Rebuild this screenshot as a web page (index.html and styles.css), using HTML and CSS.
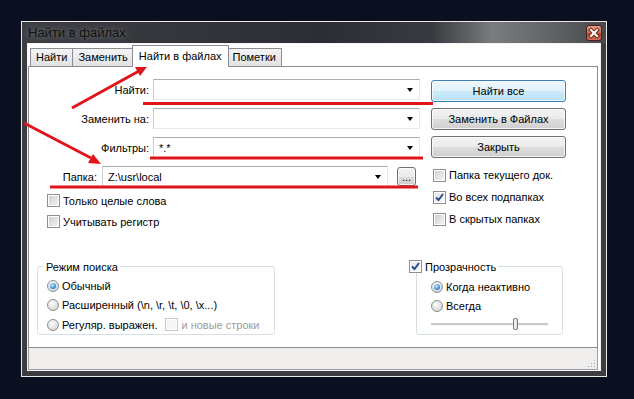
FILE: index.html
```html
<!DOCTYPE html>
<html lang="ru">
<head>
    <meta charset="UTF-8">
    <title>Найти в файлах</title>
    <link rel="stylesheet" href="styles.css">
</head>
<body>
    <div class="desk">
        <div class="window">
            <div class="titlebar">
                <span class="title">Найти в файлах</span>
                <span class="close">
                    <svg width="14" height="14" viewBox="0 0 14 14">
                        <path d="M4 4 L10 10 M10 4 L4 10" stroke="#6b2a1c" stroke-width="4" stroke-linecap="square"/>
                        <path d="M4 4 L10 10 M10 4 L4 10" stroke="#fff" stroke-width="2" stroke-linecap="square"/>
                    </svg>
                </span>
            </div>
            <div class="client">
                <div class="tabs">
                    <div class="tab">Найти</div>
                    <div class="tab">Заменить</div>
                    <div class="tab active">Найти в файлах</div>
                    <div class="tab">Пометки</div>
                </div>
                <div class="panel">
                    <div class="top">
                        <div class="fields">
                            <div class="row">
                                <label class="lbl">Найти:</label>
                                <div class="combo"><span class="arrow"></span></div>
                            </div>
                            <div class="row">
                                <label class="lbl">Заменить на:</label>
                                <div class="combo"><span class="arrow"></span></div>
                            </div>
                            <div class="row">
                                <label class="lbl">Фильтры:</label>
                                <div class="combo">*.*<span class="arrow"></span></div>
                            </div>
                            <div class="row folder">
                                <label class="lbl">Папка:</label>
                                <div class="combo">Z:\usr\local<span class="arrow"></span></div>
                                <button class="btn small">...</button>
                            </div>
                            <div class="check-row"><span class="box"></span>Только целые слова</div>
                            <div class="check-row"><span class="box"></span>Учитывать регистр</div>
                        </div>
                        <div class="actions">
                            <button class="btn default">Найти все</button>
                            <button class="btn">Заменить в Файлах</button>
                            <button class="btn">Закрыть</button>
                            <div class="checks">
                                <div class="check-row"><span class="box"></span>Папка текущего док.</div>
                                <div class="check-row"><span class="box on"><svg width="11" height="11" viewBox="0 0 11 11"><path d="M2 5.5 L4.5 8 L9 2" stroke="#2b4a8c" stroke-width="2" fill="none"/></svg></span>Во всех подпапках</div>
                                <div class="check-row"><span class="box"></span>В скрытых папках</div>
                            </div>
                        </div>
                    </div>
                    <div class="bottom">
                        <fieldset class="group mode">
                            <legend>Режим поиска</legend>
                            <div class="opt"><span class="radio on"></span>Обычный</div>
                            <div class="opt"><span class="radio"></span>Расширенный (\n, \r, \t, \0, \x...)</div>
                            <div class="opt"><span class="radio"></span>Регуляр. выражен.<span class="box off"></span><span class="dim">и новые строки</span></div>
                        </fieldset>
                        <fieldset class="group transp">
                            <legend><span class="box on"><svg width="11" height="11" viewBox="0 0 11 11"><path d="M2 5.5 L4.5 8 L9 2" stroke="#2b4a8c" stroke-width="2" fill="none"/></svg></span>Прозрачность</legend>
                            <div class="opt"><span class="radio on"></span>Когда неактивно</div>
                            <div class="opt"><span class="radio"></span>Всегда</div>
                            <div class="slider"><span class="thumb"></span></div>
                        </fieldset>
                    </div>
                </div>
                <div class="status">
                    <svg class="grip" width="9" height="9" viewBox="0 0 9 9" fill="#a9a9a9">
                        <rect x="7" y="1" width="1" height="1"/>
                        <rect x="4" y="4" width="1" height="1"/>
                        <rect x="7" y="4" width="1" height="1"/>
                        <rect x="1" y="7" width="1" height="1"/>
                        <rect x="4" y="7" width="1" height="1"/>
                        <rect x="7" y="7" width="1" height="1"/>
                    </svg>
                </div>
            </div>
        </div>
    </div>

    <!-- red annotations drawn over the dialog -->
    <svg class="marks" width="634" height="399">
        <g stroke="#e0141b" stroke-width="3" fill="none">
            <line x1="72" y1="108" x2="139" y2="71"/>
            <line x1="24" y1="123" x2="91" y2="158"/>
            <line x1="143" y1="103.5" x2="433" y2="103.5"/>
            <line x1="150" y1="158" x2="423" y2="158"/>
            <line x1="50" y1="187" x2="418" y2="187"/>
        </g>
        <g fill="#e0141b">
            <polygon points="148,65.5 140,76 135,67"/>
            <polygon points="101,164 88,163 93,154"/>
        </g>
    </svg>
</body>
</html>
```

FILE: styles.css
```css
* {
  box-sizing: border-box;
}

body {
  margin: 0;
  width: 634px;
  height: 399px;
  overflow: hidden;
  position: relative;
  background: #0b1020;
  font-family: "Liberation Sans", Arial, sans-serif;
  font-size: 11px;
  color: #000;
}

.desk {
  padding: 21px 0 0 21px;
}

.window {
  width: 586px;
  height: 356px;
  border: 1px solid #e9e9e9;
  background: #3c3d41;
  padding: 0 5px 5px;
  display: flex;
  flex-direction: column;
}

.titlebar {
  height: 21px;
  margin: 0 -5px;
  padding: 0 4px 0 6px;
  display: flex;
  align-items: center;
  justify-content: space-between;
  background: linear-gradient(90deg, #3d3e43 0px, #2d2e33 300px, #393a3f 410px, #7a7b7f 470px, #626367 530px, #47484c 584px);
}

.title {
  font-size: 13px;
  color: #111;
  text-shadow: 0 0 6px #8c8c8c;
}

.close {
  width: 16px;
  height: 16px;
  border: 1px solid #4d2117;
  border-radius: 3px;
  background: linear-gradient(#e7a08e, #d06a52 50%, #bb3f26 51%, #d0705a);
  display: flex;
  align-items: center;
  justify-content: center;
}

.client {
  flex: 1;
  border: 1px solid #f4f4f4;
  background: #fff;
  display: flex;
  flex-direction: column;
}

.tabs {
  height: 22px;
  display: flex;
  align-items: flex-end;
  padding-left: 2px;
}

.tab {
  height: 18px;
  padding: 0 5px;
  line-height: 16px;
  border: 1px solid #898c95;
  border-bottom: none;
  margin-right: -1px;
  background: linear-gradient(#f3f3f3, #e2e2e2);
}

.tab.active {
  height: 22px;
  line-height: 20px;
  margin: 0 -2px -1px -1px;
  padding: 0 6px;
  background: #fff;
  position: relative;
  z-index: 1;
}

.panel {
  height: 282px;
  margin-right: 2px;
  border: 1px solid #898c95;
  display: flex;
  flex-direction: column;
}

.top {
  display: flex;
  padding-top: 12px;
}

.fields {
  width: 392px;
}

.row {
  height: 21px;
  display: flex;
  align-items: center;
  margin-bottom: 8px;
}

.lbl {
  width: 120px;
  margin-right: 4px;
  text-align: right;
}

.combo {
  width: 267px;
  height: 21px;
  padding: 0 6px 0 5px;
  display: flex;
  align-items: center;
  border: 1px solid #e3e9ef;
  border-top-color: #abadb3;
  border-left-color: #c8ccd2;
  background: #fff;
}

.arrow {
  margin-left: auto;
  border-top: 4px solid #000;
  border-left: 3.5px solid transparent;
  border-right: 3.5px solid transparent;
}

.row.folder {
  margin-bottom: 3px;
}

.row.folder .lbl {
  width: 68px;
  margin-right: 5px;
}

.row.folder .combo {
  width: 286px;
}

.check-row {
  height: 21px;
  display: flex;
  align-items: center;
  padding-left: 18px;
}

.box {
  width: 13px;
  height: 13px;
  margin-right: 3px;
  border: 1px solid #8e8f8f;
  background: linear-gradient(135deg, #c9ccd1, #f6f6f6);
  box-shadow: inset 0 0 0 1px #fff;
  display: flex;
  align-items: center;
  justify-content: center;
}

.box.on {
  background: linear-gradient(135deg, #dfe3ea, #fbfbfb);
}

.box.off {
  margin: 0 3px 0 8px;
  border-color: #c8c8c8;
  background: #f6f6f6;
}

.dim {
  color: #9c9c9c;
}

.actions {
  width: 135px;
  margin-left: 10px;
  padding-top: 1px;
}

.btn {
  display: block;
  width: 135px;
  height: 22px;
  margin-bottom: 6px;
  padding: 0;
  font-family: inherit;
  font-size: 11px;
  color: #000;
  border: 1px solid #707070;
  border-radius: 3px;
  background: linear-gradient(#f2f2f2 0%, #ebebeb 50%, #dddddd 51%, #cfcfcf 100%);
  box-shadow: inset 0 0 0 1px rgba(255, 255, 255, 0.7);
}

.btn.default {
  border-color: #3c7fb1;
  background: linear-gradient(#eef8fd 0%, #e0f2fc 50%, #cdebfb 51%, #b9e0f5 100%);
}

.btn.small {
  width: 19px;
  height: 19px;
  margin: 0 0 0 9px;
  line-height: 12px;
}

.checks {
  margin-top: 2px;
}

.checks .check-row {
  height: 22px;
  padding-left: 2px;
}

.bottom {
  display: flex;
  align-items: flex-start;
  margin-top: 28px;
}

.group {
  height: 75px;
  margin: 0;
  border: 1px solid #d5dfe5;
  border-radius: 3px;
}

.group legend {
  display: flex;
  align-items: center;
  height: 13px;
  padding: 0 2px;
}

.mode {
  width: 238px;
  margin-left: 8px;
  padding: 3px 0 0 9px;
}

.mode legend {
  margin-left: -3px;
}

.transp {
  width: 147px;
  margin-left: 141px;
  padding: 4px 0 0 14px;
}

.transp legend {
  margin-left: -22px;
  padding-left: 0;
}

.opt {
  height: 19.5px;
  display: flex;
  align-items: center;
}

.radio {
  width: 12px;
  height: 12px;
  margin-right: 3px;
  border-radius: 50%;
  border: 1px solid #8e8f8f;
  background: radial-gradient(circle at 40% 35%, #fdfdfd, #dadada 70%, #c6c6c6);
  display: flex;
  align-items: center;
  justify-content: center;
}

.radio.on::after {
  content: "";
  width: 6px;
  height: 6px;
  border-radius: 50%;
  background: radial-gradient(circle at 40% 35%, #c6ecff, #3a93d8 60%, #1b568f);
}

.slider {
  position: relative;
  width: 117px;
  height: 12px;
  margin-top: 2px;
  border-bottom: 1px solid #fff;
}

.slider::before {
  content: "";
  position: absolute;
  left: 0;
  right: 0;
  top: 5px;
  height: 2px;
  background: #c9c9c9;
  border-bottom: 1px solid #f4f4f4;
}

.thumb {
  position: absolute;
  left: 82px;
  top: 0;
  width: 5px;
  height: 12px;
  border: 1px solid #7b7b7b;
  border-radius: 2px;
  background: linear-gradient(90deg, #f6f6f6, #dcdcdc);
}

.status {
  flex: 1;
  margin-right: 2px;
  background: #f0eeec;
  border: 1px solid #a0a0a0;
  border-top: none;
  display: flex;
  align-items: flex-end;
  justify-content: flex-end;
  padding: 0 1px 1px 0;
}

.marks {
  position: absolute;
  left: 0;
  top: 0;
  pointer-events: none;
}
```
